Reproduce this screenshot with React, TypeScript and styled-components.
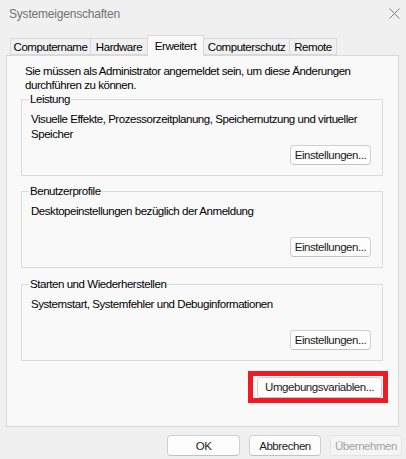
import React from 'react';
import styled, { createGlobalStyle } from 'styled-components';

const GlobalStyle = createGlobalStyle`
  html, body {
    margin: 0;
    padding: 0;
    background: #f0f0f0;
  }
  body {
    font-family: "Liberation Sans", Arial, sans-serif;
    font-size: 11.5px;
    letter-spacing: -0.45px;
    color: #000;
  }
`;

const Window = styled.div`
  width: 406px;
  height: 459px;
  display: flex;
  flex-direction: column;
  background: #f0f0f0;
  overflow: hidden;
`;

const TitleBar = styled.div`
  height: 27px;
  display: flex;
  align-items: center;
  justify-content: space-between;
  padding: 0 6px 0 9px;
  color: #727272;
  font-size: 12px;
  letter-spacing: -0.2px;
`;

const CloseIcon = () => (
  <svg width="11" height="11" viewBox="0 0 11 11">
    <path d="M0.5 0.5 L10.5 10.5 M10.5 0.5 L0.5 10.5" stroke="#7a7a7a" strokeWidth="1" />
  </svg>
);

const TabStrip = styled.div`
  margin-top: 8px;
  height: 20px;
  display: flex;
  align-items: flex-end;
  padding-left: 10px;
  position: relative;
  z-index: 1;
`;

const Tab = styled.div<{ $w: number; $active?: boolean }>`
  box-sizing: border-box;
  width: ${(p) => p.$w}px;
  height: ${(p) => (p.$active ? 21 : 17)}px;
  margin-right: -1px;
  margin-bottom: ${(p) => (p.$active ? -1 : 0)}px;
  display: flex;
  align-items: center;
  justify-content: center;
  border: 1px solid #d9d9d9;
  border-bottom: ${(p) => (p.$active ? 'none' : '1px solid #d9d9d9')};
  background: ${(p) => (p.$active ? '#f9f9f9' : '#f0f0f0')};
  padding-bottom: ${(p) => (p.$active ? 1 : 0)}px;
  position: relative;
  z-index: ${(p) => (p.$active ? 2 : 1)};
  white-space: nowrap;
`;

const Panel = styled.div`
  box-sizing: border-box;
  margin: 0 7px 0 6px;
  height: 372px;
  border: 1px solid #d9d9d9;
  background: #f9f9f9;
  padding: 8px 15px 0 14px;
  display: flex;
  flex-direction: column;
`;

const Intro = styled.div`
  padding-left: 4px;
  line-height: 14px;
`;

const Group = styled.fieldset<{ $gap?: number }>`
  margin: ${(p) => p.$gap ?? 0}px 0 0 0;
  padding: 0 11px 10px 9px;
  border: 1px solid #dcdcdc;
  min-width: 0;
`;

const Legend = styled.legend`
  margin-left: -2px;
  padding: 0 1px;
  line-height: 14px;
`;

const GroupBody = styled.div`
  height: 53px;
  padding-top: 6px;
  display: flex;
  flex-direction: column;
`;

const Description = styled.div`
  line-height: 15px;
`;

const ButtonRow = styled.div`
  margin-top: auto;
  display: flex;
  justify-content: flex-end;
`;

const Button = styled.button<{ $w: number; $h?: number }>`
  box-sizing: border-box;
  width: ${(p) => p.$w}px;
  height: ${(p) => p.$h ?? 20}px;
  padding: 0;
  font-family: inherit;
  font-size: inherit;
  letter-spacing: inherit;
  color: #1b1b1b;
  background: #fdfdfd;
  border: 1px solid #d0d0d0;
  border-bottom-color: #c2c2c2;
  border-radius: 4px;
  white-space: nowrap;

  &:disabled {
    color: #a3a3a3;
    background: #f5f5f5;
    border-color: #e3e3e3;
  }
`;

const Highlight = styled.div`
  box-sizing: border-box;
  align-self: flex-end;
  margin: 10px -5px 0 0;
  width: 140px;
  height: 32px;
  border: 5px solid #ed1c24;
  padding: 0 1px 0 4px;
  display: flex;
  align-items: center;
`;

const Footer = styled.div`
  margin-top: 8px;
  padding-right: 4px;
  display: flex;
  justify-content: flex-end;
  gap: 9px;
`;

const tabs = [
  { label: 'Computername', w: 81 },
  { label: 'Hardware', w: 58 },
  { label: 'Erweitert', w: 57, active: true },
  { label: 'Computerschutz', w: 87 },
  { label: 'Remote', w: 48 },
];

const groups = [
  {
    title: 'Leistung',
    text: 'Visuelle Effekte, Prozessorzeitplanung, Speichernutzung und virtueller Speicher',
    gap: 0,
  },
  { title: 'Benutzerprofile', text: 'Desktopeinstellungen bezüglich der Anmeldung', gap: 8 },
  {
    title: 'Starten und Wiederherstellen',
    text: 'Systemstart, Systemfehler und Debuginformationen',
    gap: 9,
  },
];

export default function App() {
  return (
    <>
      <GlobalStyle />
      <Window>
        <TitleBar>
          <span>Systemeigenschaften</span>
          <CloseIcon />
        </TitleBar>
        <TabStrip>
          {tabs.map((t) => (
            <Tab key={t.label} $w={t.w} $active={t.active}>
              {t.label}
            </Tab>
          ))}
        </TabStrip>
        <Panel>
          <Intro>
            Sie müssen als Administrator angemeldet sein, um diese Änderungen
            <br />
            durchführen zu können.
          </Intro>
          {groups.map((g) => (
            <Group key={g.title} $gap={g.gap}>
              <Legend>{g.title}</Legend>
              <GroupBody>
                <Description>{g.text}</Description>
                <ButtonRow>
                  <Button $w={81}>Einstellungen...</Button>
                </ButtonRow>
              </GroupBody>
            </Group>
          ))}
          <Highlight>
            <Button $w={125} $h={21}>Umgebungsvariablen...</Button>
          </Highlight>
        </Panel>
        <Footer>
          <Button $w={73} $h={21}>OK</Button>
          <Button $w={72} $h={21}>Abbrechen</Button>
          <Button $w={72} $h={21} disabled>
            Übernehmen
          </Button>
        </Footer>
      </Window>
    </>
  );
}
